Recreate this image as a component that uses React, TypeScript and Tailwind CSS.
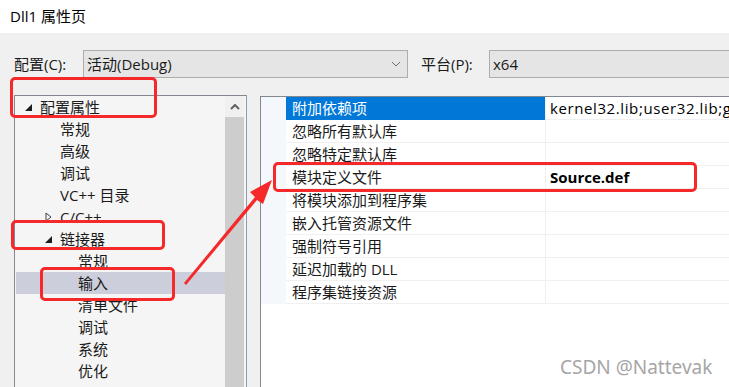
import React from "react";

const treeItems: { label: string; indent: number; expander?: "open" | "closed"; selected?: boolean }[] = [
  { label: "配置属性", indent: 40, expander: "open" },
  { label: "常规", indent: 60 },
  { label: "高级", indent: 60 },
  { label: "调试", indent: 60 },
  { label: "VC++ 目录", indent: 60 },
  { label: "C/C++", indent: 60, expander: "closed" },
  { label: "链接器", indent: 60, expander: "open" },
  { label: "常规", indent: 78 },
  { label: "输入", indent: 78, selected: true },
  { label: "清单文件", indent: 78 },
  { label: "调试", indent: 78 },
  { label: "系统", indent: 78 },
  { label: "优化", indent: 78 },
];

const props: { name: string; value?: string; bold?: boolean; selected?: boolean }[] = [
  { name: "附加依赖项", value: "kernel32.lib;user32.lib;gdi32.lib;winspool.lib", selected: true },
  { name: "忽略所有默认库" },
  { name: "忽略特定默认库" },
  { name: "模块定义文件", value: "Source.def", bold: true },
  { name: "将模块添加到程序集" },
  { name: "嵌入托管资源文件" },
  { name: "强制符号引用" },
  { name: "延迟加载的 DLL" },
  { name: "程序集链接资源" },
];

export default function App() {
  const font = { fontFamily: '"Open Sans", "Noto Sans CJK SC", sans-serif' };
  return (
    <div
      className="relative w-[729px] h-[387px] overflow-hidden bg-[#f0f0f0] text-[#1a1a1a] text-[15px]"
      style={font}
    >
      {/* title bar */}
      <div className="h-[33px] bg-white flex items-center pl-[10px] text-[15px] leading-none text-black">
        Dll1 属性页
      </div>

      {/* config row */}
      <div className="mt-[17px] h-[28px] flex items-center">
        <div className="ml-[14px] w-[69px] shrink-0 leading-none">配置(C):</div>
        <div className="w-[325px] shrink-0 h-[28px] border border-[#adadad] bg-[#e5e5e5] flex items-center pl-[3px] pr-[5px]">
          <span className="flex-1 leading-none">活动(Debug)</span>
          <svg width="10" height="6" viewBox="0 0 10 6" className="mr-[1px]">
            <path d="M1 1 L5 5 L9 1" fill="none" stroke="#707070" strokeWidth="1" />
          </svg>
        </div>
        <div className="ml-[13px] w-[68px] shrink-0 leading-none">平台(P):</div>
        <div className="flex-1 h-[28px] border border-[#adadad] border-r-0 bg-[#e5e5e5] flex items-center pl-[3px]">
          <span className="leading-none">x64</span>
        </div>
      </div>

      {/* panels */}
      <div className="mt-[17px] flex items-start">
        {/* tree */}
        <div className="ml-[14px] w-[233px] shrink-0 h-[300px] border border-[#828790] border-r-[#8a9bb0] bg-[#f5f5f5] flex">
          <div className="flex-1 flex flex-col">
            {treeItems.map((it, i) => (
              <div
                key={i}
                className={`relative h-[22px] flex items-center leading-none whitespace-nowrap ${it.selected ? "bg-[#cccedb] ml-px" : ""}`}
                style={{ paddingLeft: it.selected ? it.indent - 16 : it.indent - 15 }}
              >
                {it.expander === "open" && (
                  <svg width="8" height="8" viewBox="0 0 8 8" className="absolute top-[8px]" style={{ left: it.indent - 30 }}>
                    <polygon points="7,0 7,7 0,7" fill="#1e1e1e" />
                  </svg>
                )}
                {it.expander === "closed" && (
                  <svg width="8" height="10" viewBox="0 0 8 10" className="absolute top-[6px]" style={{ left: it.indent - 30 }}>
                    <polygon points="1,1 6,5 1,9" fill="none" stroke="#404040" strokeWidth="1" />
                  </svg>
                )}
                <span>{it.label}</span>
              </div>
            ))}
          </div>
          <div className="w-[19px] shrink-0 flex flex-col mr-[2px]">
            <div className="h-[21px] flex items-center justify-center bg-[#f0f0f0]">
              <svg width="10" height="6" viewBox="0 0 10 6">
                <path d="M1 5 L5 1 L9 5" fill="none" stroke="#606060" strokeWidth="2" />
              </svg>
            </div>
            <div className="flex-1 bg-[#cdcdcd]" />
          </div>
        </div>

        {/* property grid */}
        <div className="ml-[13px] mt-px flex-1 min-w-0 h-[300px] border-l border-t border-[#828790] bg-white">
          {props.map((p, i) => (
            <div key={i} className="h-[23px] flex">
              <div className="w-[25px] shrink-0 bg-[#f4f7fc]" />
              <div
                className={`w-[259px] shrink-0 flex items-center pl-[6px] leading-none whitespace-nowrap border-b ${
                  p.selected ? "bg-[#0078d7] text-white border-[#0078d7]" : "border-[#f0f0f0]"
                }`}
              >
                {p.name}
              </div>
              <div
                className={`flex-1 min-w-0 flex items-center pl-[4px] leading-none whitespace-nowrap overflow-hidden border-l border-b border-[#f0f0f0] text-black ${
                  p.bold ? "font-bold" : "tracking-[0.6px]"
                }`}
              >
                {p.value ?? ""}
              </div>
            </div>
          ))}
        </div>
      </div>

      {/* annotations */}
      <div className="absolute left-[10px] top-[77px] w-[147px] h-[41px] border-[3px] border-[#f5282a] rounded-[5px]" />
      <div className="absolute left-[11px] top-[220px] w-[154px] h-[30px] border-[3px] border-[#f5282a] rounded-[5px]" />
      <div className="absolute left-[40px] top-[267px] w-[135px] h-[34px] border-[3px] border-[#f5282a] rounded-[5px]" />
      <div className="absolute left-[273px] top-[162px] w-[424px] h-[30px] border-[3px] border-[#f5282a] rounded-[5px]" />
      <svg className="absolute left-0 top-0" width="729" height="387" viewBox="0 0 729 387">
        <polygon
          points="184,283 186,285 257,200 263,204 272,180 250,192 255,197"
          fill="#f5282a"
        />
      </svg>

      {/* watermark */}
      <div
        className="absolute left-[560px] top-[358px] text-[19px] leading-none text-[#a6a6a6] whitespace-nowrap"
        style={{ fontFamily: '"Noto Sans", sans-serif' }}
      >
        CSDN @Nattevak
      </div>
    </div>
  );
}
